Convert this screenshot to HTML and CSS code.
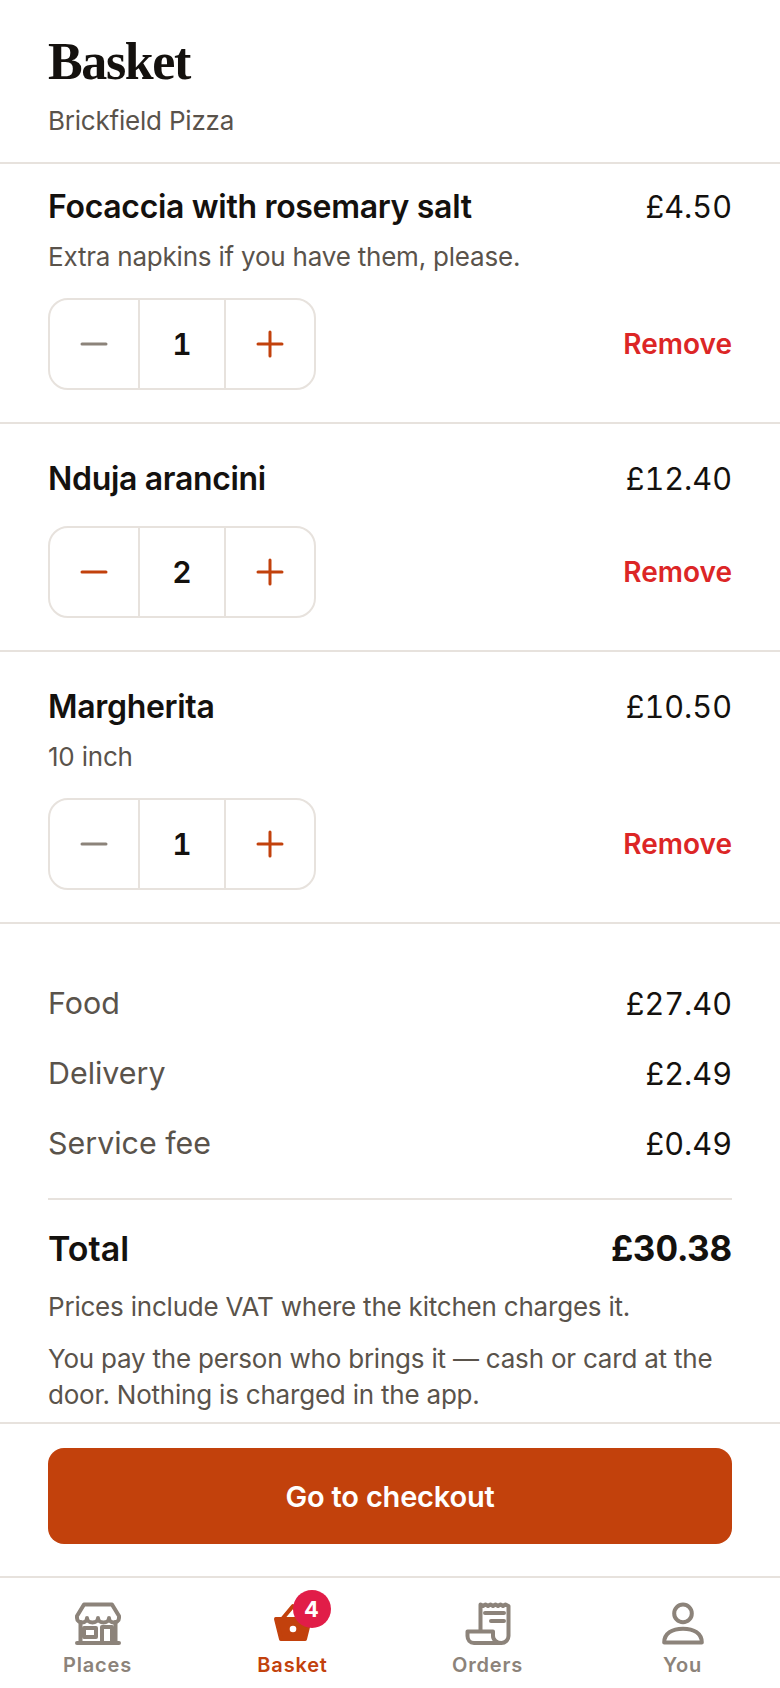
FILE: index.html
```html
<!DOCTYPE html>
<html lang="en">

<head>
    <meta charset="UTF-8">
    <meta name="viewport" content="width=device-width, initial-scale=1.0">
    <title>Basket</title>
    <link rel="stylesheet" href="styles.css">
</head>

<body>
    <div class="screen">
        <div class="head">
            <h1 class="title">Basket</h1>
            <div class="place">Brickfield Pizza</div>
        </div>

        <div class="item item-first">
            <div class="itemTop">
                <span class="itemName">Focaccia with rosemary salt</span>
                <span class="itemPrice">£4.50</span>
            </div>
            <div class="itemNote">Extra napkins if you have them, please.</div>
            <div class="itemBottom">
                <div class="stepper">
                    <span class="stepBtn btn-off"><svg width="28" height="28" viewBox="0 0 28 28"><path d="M2 14H26" /></svg></span>
                    <span class="stepNum">1</span>
                    <span class="stepBtn"><svg width="28" height="28" viewBox="0 0 28 28"><path d="M2 14H26M14 2V26" /></svg></span>
                </div>
                <span class="remove">Remove</span>
            </div>
        </div>

        <div class="item">
            <div class="itemTop">
                <span class="itemName">Nduja arancini</span>
                <span class="itemPrice">£12.40</span>
            </div>
            <div class="itemBottom itemBottom-wide">
                <div class="stepper">
                    <span class="stepBtn"><svg width="28" height="28" viewBox="0 0 28 28"><path d="M2 14H26" /></svg></span>
                    <span class="stepNum">2</span>
                    <span class="stepBtn"><svg width="28" height="28" viewBox="0 0 28 28"><path d="M2 14H26M14 2V26" /></svg></span>
                </div>
                <span class="remove">Remove</span>
            </div>
        </div>

        <div class="item">
            <div class="itemTop">
                <span class="itemName">Margherita</span>
                <span class="itemPrice">£10.50</span>
            </div>
            <div class="itemNote">10 inch</div>
            <div class="itemBottom">
                <div class="stepper">
                    <span class="stepBtn btn-off"><svg width="28" height="28" viewBox="0 0 28 28"><path d="M2 14H26" /></svg></span>
                    <span class="stepNum">1</span>
                    <span class="stepBtn"><svg width="28" height="28" viewBox="0 0 28 28"><path d="M2 14H26M14 2V26" /></svg></span>
                </div>
                <span class="remove">Remove</span>
            </div>
        </div>

        <div class="summary">
            <div class="sumRow"><span class="sumLabel">Food</span><span class="sumNum">£27.40</span></div>
            <div class="sumRow"><span class="sumLabel">Delivery</span><span class="sumNum">£2.49</span></div>
            <div class="sumRow"><span class="sumLabel">Service fee</span><span class="sumNum">£0.49</span></div>
            <div class="totalRow"><span>Total</span><span class="totalNum">£30.38</span></div>
            <p class="fine">Prices include VAT where the kitchen charges it.</p>
            <p class="fine">You pay the person who brings it — cash or card at the door. Nothing is charged in the app.</p>
        </div>

        <div class="checkout">
            <div class="checkoutBtn">Go to checkout</div>
        </div>

        <div class="tabs">
            <div class="tab">
                <svg class="tabIcon" width="48" height="48" viewBox="0 0 48 48">
                    <path d="M10 4.500H38L45 16V18C45 21 42 22.500 39.700 22.500C37 22.500 35 20.500 35 18C35 20.500 32.500 22.500 29.500 22.500C26.500 22.500 24 20.500 24 18C24 20.500 21.500 22.500 18.500 22.500C15.500 22.500 13 20.500 13 18C13 20.500 11 22.500 8.300 22.500C6 22.500 3 21 3 18V16Z" />
                    <path d="M6.500 22V43M41.500 22V43M3 43H45" />
                    <path d="M10 28H22V37H10ZM28 43V27H38V43" />
                </svg>
                <span class="tabName">Places</span>
            </div>
            <div class="tab tab-on">
                <span class="tabWrap">
                    <svg class="tabIcon" width="48" height="48" viewBox="0 0 48 48">
                        <path class="fillPath" d="M7 19H41L36 39H12Z" />
                        <path d="M14 18L24 6L34 18" />
                        <circle class="dot" cx="24" cy="29" r="3.300" />
                    </svg>
                    <span class="badge">4</span>
                </span>
                <span class="tabName">Basket</span>
            </div>
            <div class="tab">
                <svg class="tabIcon" width="48" height="48" viewBox="0 0 48 48">
                    <path d="M16.500 30V4.500L19 6L21.500 4.500L24 6L26.500 4.500L29 6L31.500 4.500L34 6L36.500 4.500L39 6L41.500 4.500L44.500 6V36C44.500 40 41 43 37.500 43C33 43 29 40 29 36V31.500H3.500V36C3.500 40 6 43 10 43H37.500" />
                    <path d="M21 13H40M27 21H40" />
                </svg>
                <span class="tabName">Orders</span>
            </div>
            <div class="tab">
                <svg class="tabIcon" width="48" height="48" viewBox="0 0 48 48">
                    <circle cx="24" cy="13.400" r="8.800" />
                    <path d="M5.200 42.500C5.200 33.500 13 28.700 24 28.700C35 28.700 42.800 33.500 42.800 42.500Z" />
                </svg>
                <span class="tabName">You</span>
            </div>
        </div>
    </div>
</body>

</html>
```

FILE: styles.css
```css
* {
    box-sizing: border-box;
}

html,
body {
    margin: 0;
    padding: 0;
    background-color: rgb(255, 255, 255);
}

body {
    font-family: Inter, "Liberation Sans", sans-serif;
    color: rgb(20, 17, 14);
}

.screen {
    width: 780px;
    height: 1688px;
    display: flex;
    flex-direction: column;
    overflow: hidden;
}

.head {
    padding: 32px 48px 24px;
    height: 164px;
    border-bottom: 2px solid rgb(231, 226, 221);
}

.title {
    margin: 0;
    font-family: "Liberation Serif", serif;
    font-size: 52px;
    line-height: 60px;
    font-weight: 700;
    letter-spacing: -1.4px;
}

.place {
    margin-top: 11px;
    font-size: 26px;
    line-height: 36px;
    letter-spacing: -0.21px;
    color: rgb(90, 83, 75);
}

.item {
    padding: 32px 48px;
    border-bottom: 2px solid rgb(231, 226, 221);
}

.item-first {
    padding-top: 20px;
}

.itemTop {
    display: flex;
    justify-content: space-between;
    align-items: baseline;
    font-size: 32px;
    line-height: 46px;
}

.itemName {
    font-weight: 600;
    letter-spacing: -0.32px;
}

.itemPrice {
    font-size: 30.6px;
    font-variant-numeric: tabular-nums;
}

.itemNote {
    margin-top: 9px;
    font-size: 26px;
    line-height: 36px;
    letter-spacing: -0.21px;
    color: rgb(90, 83, 75);
}

.itemBottom {
    display: flex;
    justify-content: space-between;
    align-items: center;
    margin-top: 23px;
}

.itemBottom-wide {
    margin-top: 24px;
}

.stepper {
    display: flex;
    width: 268px;
    height: 92px;
    border: 2px solid rgb(231, 226, 221);
    border-radius: 20px;
}

.stepBtn {
    width: 88px;
    display: flex;
    align-items: center;
    justify-content: center;
}

.stepBtn svg path {
    fill: none;
    stroke: rgb(194, 65, 12);
    stroke-width: 3;
    stroke-linecap: round;
}

.stepBtn.btn-off svg path {
    stroke: rgb(140, 131, 122);
}

.stepNum {
    width: 88px;
    display: flex;
    align-items: center;
    justify-content: center;
    border-left: 2px solid rgb(231, 226, 221);
    border-right: 2px solid rgb(231, 226, 221);
    font-size: 30px;
    font-weight: 600;
    font-variant-numeric: tabular-nums;
}

.remove {
    font-size: 28px;
    font-weight: 600;
    color: rgb(220, 38, 38);
}

.summary {
    padding: 44px 48px 0;
    flex: 1;
}

.sumRow {
    display: flex;
    justify-content: space-between;
    align-items: center;
    height: 70px;
}

.sumLabel {
    font-size: 30.4px;
    color: rgb(90, 83, 75);
}

.sumNum {
    font-size: 30.6px;
    font-variant-numeric: tabular-nums;
}

.totalRow {
    display: flex;
    justify-content: space-between;
    align-items: center;
    margin-top: 20px;
    padding-top: 24px;
    border-top: 2px solid rgb(231, 226, 221);
    font-size: 34px;
    line-height: 49px;
    font-weight: 600;
}

.totalNum {
    font-weight: 700;
    font-size: 35px;
    letter-spacing: -0.2px;
    font-variant-numeric: tabular-nums;
}

.fine {
    margin: 16px 0 0;
    font-size: 26px;
    line-height: 36px;
    letter-spacing: -0.21px;
    color: rgb(90, 83, 75);
}

.checkout {
    padding: 24px 48px 32px;
    border-top: 2px solid rgb(231, 226, 221);
}

.checkoutBtn {
    height: 96px;
    display: flex;
    align-items: center;
    justify-content: center;
    border-radius: 16px;
    background-color: rgb(194, 65, 12);
    color: white;
    font-size: 29px;
    font-weight: 600;
    letter-spacing: -0.2px;
}

.tabs {
    display: flex;
    height: 112px;
    padding-top: 22px;
    border-top: 2px solid rgb(231, 226, 221);
}

.tab {
    flex: 1;
    display: flex;
    flex-direction: column;
    align-items: center;
    gap: 4px;
    color: rgb(140, 131, 122);
}

.tabWrap {
    position: relative;
    display: block;
    height: 48px;
}

.tabIcon {
    display: block;
    fill: none;
    stroke: currentColor;
    stroke-width: 4;
    stroke-linecap: round;
    stroke-linejoin: round;
}

.tab-on {
    color: rgb(194, 65, 12);
}

.fillPath {
    fill: currentColor;
}

.dot {
    fill: white;
    stroke: none;
}

.tabName {
    font-size: 20px;
    line-height: 26px;
    font-weight: 600;
    letter-spacing: 0.8px;
}

.badge {
    position: absolute;
    top: -10px;
    left: 24px;
    width: 38px;
    height: 38px;
    border-radius: 50%;
    background-color: rgb(225, 29, 72);
    color: white;
    font-size: 22px;
    line-height: 38px;
    font-weight: 700;
    text-align: center;
}
```
